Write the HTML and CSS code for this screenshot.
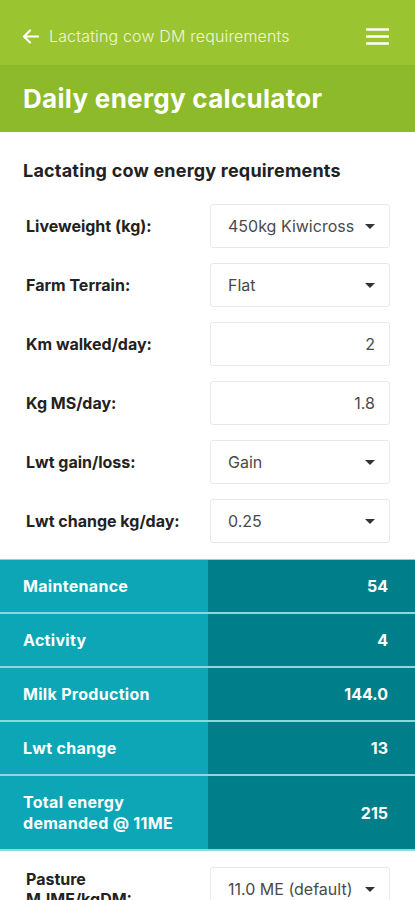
FILE: index.html
```html
<!DOCTYPE html>
<html>
<head>
<meta charset="utf-8">
<link rel="stylesheet" href="styles.css">
</head>
<body>
<div class="topbar">
  <div class="back">
    <svg width="17" height="15" viewBox="0 0 17 15"><path d="M8 1.5 2 7.5l6 6M2 7.5h14" fill="none" stroke="#fff" stroke-width="2.2" stroke-linecap="round" stroke-linejoin="round"/></svg>
    <span class="crumb">Lactating cow DM requirements</span>
  </div>
  <svg class="menu" width="23" height="17" viewBox="0 0 23 17"><path d="M1 1.5h21M1 8.5h21M1 15.5h21" stroke="#fff" stroke-width="2.6" stroke-linecap="round"/></svg>
</div>
<div class="titleband"><h1>Daily energy calculator</h1></div>
<main>
  <h2>Lactating cow energy requirements</h2>
  <div class="form">
    <div class="row"><label>Liveweight (kg):</label><div class="field select"><span>450kg Kiwicross</span><i class="caret"></i></div></div>
    <div class="row"><label>Farm Terrain:</label><div class="field select"><span>Flat</span><i class="caret"></i></div></div>
    <div class="row"><label>Km walked/day:</label><div class="field num">2</div></div>
    <div class="row"><label>Kg MS/day:</label><div class="field num">1.8</div></div>
    <div class="row"><label>Lwt gain/loss:</label><div class="field select"><span>Gain</span><i class="caret"></i></div></div>
    <div class="row"><label>Lwt change kg/day:</label><div class="field select"><span>0.25</span><i class="caret"></i></div></div>
  </div>
</main>
<div class="results">
  <div class="res"><div class="k">Maintenance</div><div class="v">54</div></div>
  <div class="res"><div class="k">Activity</div><div class="v">4</div></div>
  <div class="res"><div class="k">Milk Production</div><div class="v">144.0</div></div>
  <div class="res"><div class="k">Lwt change</div><div class="v">13</div></div>
  <div class="res total"><div class="k">Total energy<br>demanded @ 11ME</div><div class="v">215</div></div>
</div>
<div class="form after">
  <div class="row"><label>Pasture<br>MJME/kgDM:</label><div class="field select"><span>11.0 ME (default)</span><i class="caret"></i></div></div>
</div>
</body>
</html>
```
FILE: styles.css
```css
* { box-sizing: border-box; }
body { margin: 0; font-family: Inter, "Open Sans", sans-serif; background: #fff; color: #222; }
.topbar { height: 65px; background: #9bc431; display: flex; align-items: center; justify-content: space-between; padding: 7px 26px 0 22px; }
.back { display: flex; align-items: center; gap: 10px; }
.crumb { color: #eef6da; font-size: 16px; font-weight: 300; letter-spacing: 0.15px; }
.titleband { height: 67px; background: #8dba2a; display: flex; align-items: center; padding: 0 23px; }
h1 { margin: 0; color: #fff; font-size: 26px; font-weight: 700; letter-spacing: 0.3px; }
main { padding: 28px 0 0; }
h2 { margin: 0 0 23px 23px; font-size: 18px; font-weight: 700; color: #222; letter-spacing: 0.2px; }
.form { display: flex; flex-direction: column; gap: 15px; padding: 0 25px 0 26px; }
.row { display: flex; align-items: center; justify-content: space-between; }
.row label { font-size: 16px; font-weight: 700; color: #222; }
.field { width: 180px; height: 44px; border: 1px solid #e8e8e8; border-radius: 3px; display: flex; align-items: center; font-size: 16px; color: #4a4a4a; padding: 0 14px 0 17px; }
.select { justify-content: space-between; }
.num { justify-content: flex-end; }
.caret { width: 0; height: 0; border-left: 5px solid transparent; border-right: 5px solid transparent; border-top: 5px solid #333; margin-left: 4px; }
.results { margin-top: 16px; border-top: 1px solid #8ad4de; }
.res { display: grid; grid-template-columns: 208px 1fr; border-bottom: 2px solid #8fd6df; height: 54px; }
.res .k { background: #0ca6b7; color: #fff; font-weight: 700; font-size: 16px; letter-spacing: 0.3px; display: flex; align-items: center; padding-left: 23px; }
.res .v { background: #007e89; color: #fff; font-weight: 700; font-size: 16px; display: flex; align-items: center; justify-content: flex-end; padding-right: 27px; }
.res.total { height: 75px; }
.res.total .k { line-height: 21px; }
.after { padding-top: 16px; }
```
